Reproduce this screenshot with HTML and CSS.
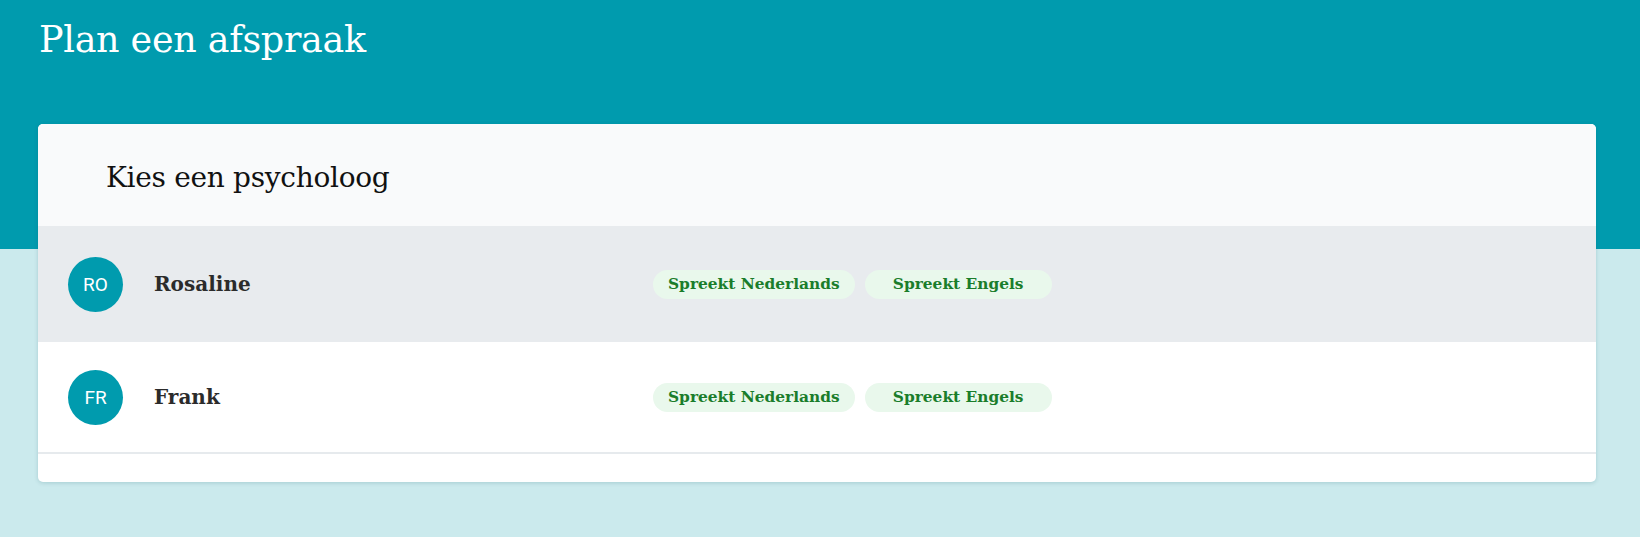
FILE: index.html
```html
<!DOCTYPE html>
<html lang="nl">
<head>
<meta charset="utf-8">
<title>Plan een afspraak</title>
<link rel="stylesheet" href="styles.css">
</head>
<body>
<div class="page">
  <h1 class="page-title">Plan een afspraak</h1>
  <section class="card">
    <header class="card-header">
      <h2 class="card-title">Kies een psycholoog</h2>
    </header>
    <ul class="list">
      <li class="row row-active">
        <span class="avatar">RO</span>
        <span class="name">Rosaline</span>
        <span class="badges">
          <span class="badge">Spreekt Nederlands</span>
          <span class="badge">Spreekt Engels</span>
        </span>
      </li>
      <li class="row">
        <span class="avatar">FR</span>
        <span class="name">Frank</span>
        <span class="badges">
          <span class="badge">Spreekt Nederlands</span>
          <span class="badge">Spreekt Engels</span>
        </span>
      </li>
    </ul>
    <div class="card-footer"></div>
  </section>
</div>
</body>
</html>
```

FILE: styles.css
```css
html, body {
  margin: 0;
  padding: 0;
}
body {
  background: linear-gradient(to bottom, #009bae 0, #009bae 249px, #cbeaed 249px, #cbeaed 100%);
  min-height: 537px;
  font-family: "DejaVu Serif", "Liberation Serif", serif;
}
.page {
  padding: 0 44px 0 38px;
}
.page-title {
  margin: 0;
  padding: 16px 0 0 1px;
  height: 124px;
  box-sizing: border-box;
  font-weight: normal;
  font-size: 36.5px;
  line-height: 48px;
  color: #ffffff;
  letter-spacing: -0.3px;
}
.card {
  background: #ffffff;
  border-radius: 5px;
  box-shadow: 0 1px 4px rgba(0, 80, 90, 0.18);
  overflow: hidden;
}
.card-header {
  background: #f9fafb;
  height: 102px;
  padding: 0 0 0 68px;
  display: flex;
  align-items: center;
}
.card-title {
  margin: 4px 0 0 0;
  font-weight: normal;
  font-size: 28px;
  color: #111111;
  letter-spacing: -0.3px;
}
.list {
  list-style: none;
  margin: 0;
  padding: 0;
}
.row {
  display: flex;
  align-items: center;
  height: 110px;
  padding-left: 30px;
  background: #ffffff;
  border-bottom: 2px solid #e6eaed;
}
.row-active {
  height: 116px;
  background: #e8ebee;
  border-bottom: none;
}
.avatar {
  flex: none;
  width: 55px;
  height: 55px;
  border-radius: 50%;
  background: #009bae;
  color: #ffffff;
  font-family: Roboto, "Open Sans", sans-serif;
  font-size: 19px;
  display: flex;
  align-items: center;
  justify-content: center;
}
.name {
  flex: none;
  width: 499px;
  margin-left: 31px;
  font-size: 20px;
  font-weight: bold;
  color: #2b2b2b;
}
.badges {
  display: flex;
  gap: 10px;
}
.badge {
  min-width: 187px;
  box-sizing: border-box;
  height: 29px;
  padding: 0 15px;
  border-radius: 15px;
  background: #e9f8ec;
  color: #1a7d2b;
  font-size: 15.4px;
  font-weight: bold;
  display: flex;
  align-items: center;
  justify-content: center;
}
.card-footer {
  height: 28px;
}
```
